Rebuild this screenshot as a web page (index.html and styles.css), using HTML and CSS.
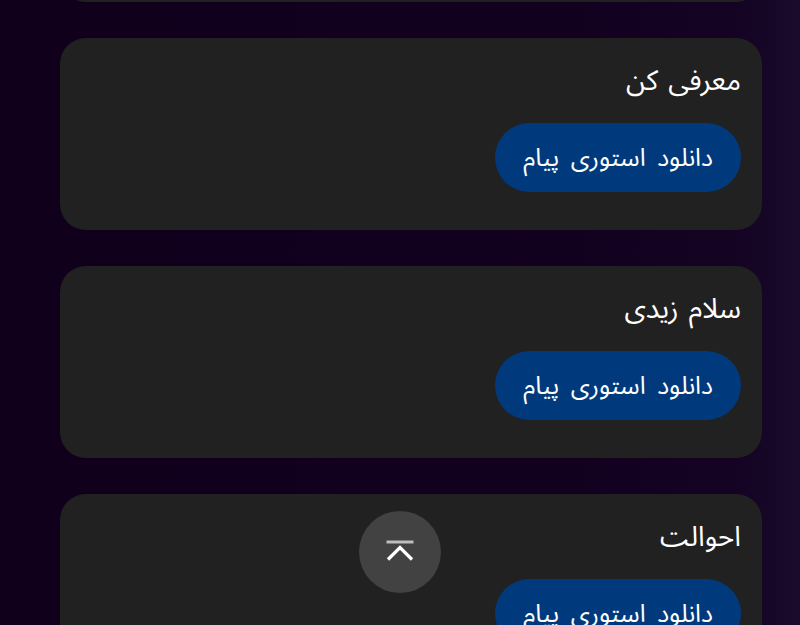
FILE: index.html
```html
<!DOCTYPE html>
<html lang="fa" dir="rtl">
<head>
<meta charset="utf-8">
<title>استوری پیام</title>
<link rel="stylesheet" href="styles.css">
</head>
<body>
<main class="page">
  <ul class="list">
    <li class="card">
      <h2 class="card-title">صبح بخیر</h2>
      <a class="btn" href="#">دانلود استوری پیام</a>
    </li>
    <li class="card">
      <h2 class="card-title">معرفی کن</h2>
      <a class="btn" href="#">دانلود استوری پیام</a>
    </li>
    <li class="card">
      <h2 class="card-title">سلام زیدی</h2>
      <a class="btn" href="#">دانلود استوری پیام</a>
    </li>
    <li class="card">
      <h2 class="card-title">احوالت</h2>
      <a class="btn" href="#">دانلود استوری پیام</a>
    </li>
  </ul>
</main>
<button class="to-top" aria-label="بازگشت به بالا">
  <svg width="30" height="22" viewBox="0 0 30 22" fill="none">
    <line x1="1.5" y1="2" x2="28.5" y2="2" stroke="#bdbdbd" stroke-width="3"/>
    <polyline points="3,19.5 15,7.5 27,19.5" stroke="#ffffff" stroke-width="3.2" stroke-linecap="butt" stroke-linejoin="miter"/>
  </svg>
</button>
</body>
</html>
```

FILE: styles.css
```css
html, body {
  margin: 0;
  padding: 0;
  height: 100%;
  overflow: hidden;
}
body {
  background: linear-gradient(90deg, #10001c 0%, #12001f 70%, #140323 92%, #1a0a2b 100%);
  font-family: "Noto Sans Arabic", "DejaVu Sans", "Noto Sans", sans-serif;
  color: #ffffff;
}
.page {
  display: flex;
  justify-content: center;
  padding: 0 38px 0 60px;
}
.list {
  list-style: none;
  margin: -190px 0 0 0;
  padding: 0;
  width: 702px;
  display: flex;
  flex-direction: column;
  gap: 36px;
}
.card {
  background: #212121;
  border-radius: 26px;
  padding: 24px 21px 38px;
  display: flex;
  flex-direction: column;
  align-items: flex-start;
  gap: 21px;
}
.card-title {
  margin: 0;
  font-size: 28px;
  font-weight: 400;
  line-height: 40px;
  word-spacing: 3px;
}
.btn {
  display: flex;
  align-items: center;
  height: 69px;
  padding: 0 28px;
  box-sizing: border-box;
  border-radius: 35px;
  background: #003a7c;
  color: #ffffff;
  text-decoration: none;
  font-size: 25px;
  word-spacing: 5px;
}
.to-top {
  position: fixed;
  left: 359px;
  bottom: 32px;
  width: 82px;
  height: 82px;
  border-radius: 50%;
  border: 0;
  background: #424242;
  display: flex;
  align-items: center;
  justify-content: center;
  padding: 0;
}
.to-top svg {
  display: block;
  margin-top: -2px;
}
```
